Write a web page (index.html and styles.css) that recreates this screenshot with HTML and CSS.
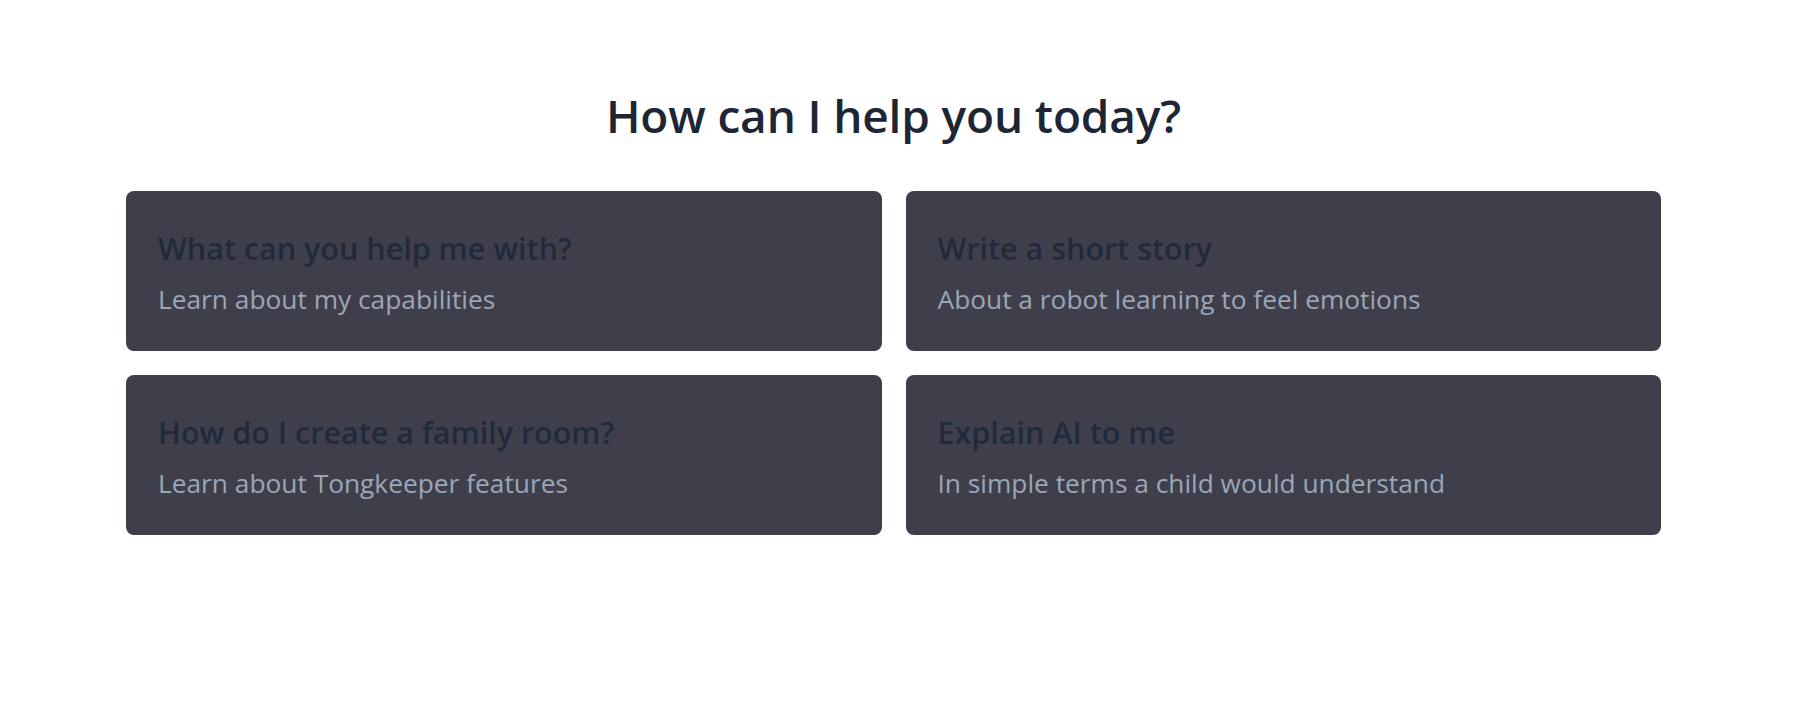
FILE: index.html
```html
<!DOCTYPE html>
<html lang="en">
<head>
<meta charset="utf-8">
<title>How can I help you today?</title>
<link rel="stylesheet" href="styles.css">
</head>
<body>
<main class="welcome">
  <h1 class="welcome-title">How can I help you today?</h1>
  <div class="prompt-grid">
    <button class="prompt-card" type="button">
      <span class="prompt-title">What can you help me with?</span>
      <span class="prompt-sub">Learn about my capabilities</span>
    </button>
    <button class="prompt-card" type="button">
      <span class="prompt-title">Write a short story</span>
      <span class="prompt-sub">About a robot learning to feel emotions</span>
    </button>
    <button class="prompt-card" type="button">
      <span class="prompt-title">How do I create a family room?</span>
      <span class="prompt-sub">Learn about Tongkeeper features</span>
    </button>
    <button class="prompt-card" type="button">
      <span class="prompt-title">Explain AI to me</span>
      <span class="prompt-sub">In simple terms a child would understand</span>
    </button>
  </div>
</main>
</body>
</html>
```

FILE: styles.css
```css
html, body {
  margin: 0;
  padding: 0;
  background: #ffffff;
}

body {
  font-family: "Open Sans", "Noto Sans", "Liberation Sans", sans-serif;
  color: #1f2937;
}

.welcome {
  width: 1535px;
  margin-left: 126px;
  padding-top: 85px;
}

.welcome-title {
  margin: 0 0 46px 0;
  font-size: 46px;
  line-height: 60px;
  font-weight: 600;
  text-align: center;
  color: #1e2636;
  letter-spacing: -0.15px;
}

.prompt-grid {
  display: grid;
  grid-template-columns: 1fr 1fr;
  column-gap: 24px;
  row-gap: 24px;
}

.prompt-card {
  display: flex;
  flex-direction: column;
  align-items: flex-start;
  text-align: left;
  background: #3f3f4b;
  border: none;
  border-radius: 8px;
  padding: 39px 32px 34px 32px;
  font-family: inherit;
  cursor: pointer;
}

.prompt-title {
  font-size: 30.5px;
  line-height: 36px;
  font-weight: 600;
  color: #1f2a3a;
}

.prompt-sub {
  margin-top: 15px;
  font-size: 26.3px;
  line-height: 36px;
  font-weight: 400;
  color: #9ba6b6;
}
```
